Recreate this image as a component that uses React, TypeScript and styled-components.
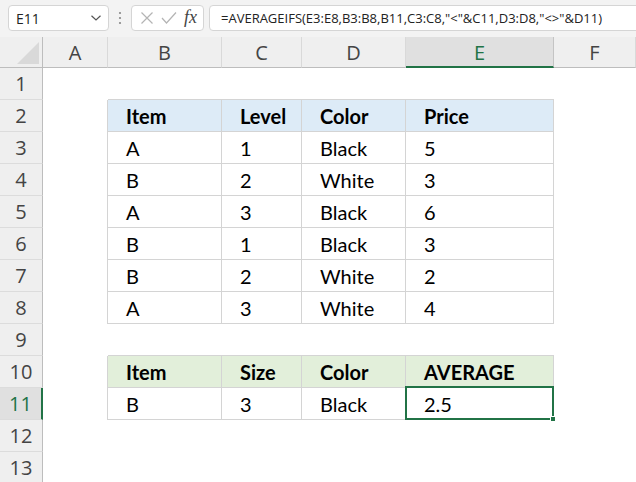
import React from "react";
import styled, { createGlobalStyle, css } from "styled-components";

const GlobalStyle = createGlobalStyle`
  html, body { margin: 0; padding: 0; background: #ffffff; }
  body { overflow: hidden; }
  * { box-sizing: border-box; }
`;

const Window = styled.div`
  width: 636px;
  height: 482px;
  overflow: hidden;
  display: flex;
  flex-direction: column;
  background: #ffffff;
  font-family: "Open Sans", "Noto Sans", sans-serif;
`;

const FormulaBar = styled.div`
  height: 37px;
  flex: none;
  display: flex;
  align-items: flex-start;
  padding: 5px 0 0 8px;
  background: #f3f3f3;
  gap: 0;
`;

const Box = styled.div`
  height: 26px;
  background: #ffffff;
  border: 1px solid #d5d5d5;
  border-radius: 4px;
  display: flex;
  align-items: center;
  font-size: 14px;
  color: #222;
`;

const NameBox = styled(Box)`
  width: 101px;
  padding: 0 6px 0 7px;
  justify-content: space-between;
`;

const Dots = styled.div`
  width: 22px;
  height: 26px;
  display: flex;
  align-items: center;
  justify-content: center;
`;

const ActionBox = styled(Box)`
  width: 73px;
  padding: 0 6px 0 8px;
  justify-content: space-between;
`;

const FormulaBox = styled(Box)`
  flex: 1;
  margin-left: 5px;
  margin-right: -12px;
  padding-left: 11px;
  white-space: nowrap;
  font-size: 13px;
`;

const Fx = styled.span`
  font-family: "Liberation Serif", "DejaVu Serif", serif;
  font-style: italic;
  font-size: 18px;
  color: #444;
  line-height: 1;
  margin-top: -3px;
`;

const Sheet = styled.div`
  flex: 1;
  display: grid;
  grid-template-columns: 43px 65px 114px 80px 104px 148px 82px;
  grid-template-rows: 31px repeat(13, 32px);
  background: #ffffff;
`;

const Corner = styled.div`
  position: relative;
  background: #efefef;
  border-right: 1px solid #bdbdbd;
  border-bottom: 1px solid #bdbdbd;
  &::after {
    content: "";
    position: absolute;
    right: 3px;
    bottom: 3px;
    width: 22px;
    height: 22px;
    background: #d9d9d9;
    clip-path: polygon(100% 0, 100% 100%, 0 100%);
  }
`;

const ColHeader = styled.div<{ $active?: boolean }>`
  background: #efefef;
  border-right: 1px solid #d9d9d9;
  border-bottom: 1px solid #bdbdbd;
  display: flex;
  justify-content: center;
  font-size: 20px;
  line-height: 30px;
  padding-top: 1px;
  color: #444;
  ${(p) =>
    p.$active &&
    css`
      background: #e0e0e0;
      color: #217346;
      border-bottom: 2px solid #217346;
      border-right-color: #c4c4c4;
    `}
`;

const RowHeader = styled.div<{ $active?: boolean }>`
  background: #efefef;
  border-right: 1px solid #bdbdbd;
  border-bottom: 1px solid #dcdcdc;
  display: flex;
  justify-content: center;
  font-size: 20px;
  line-height: 32px;
  color: #444;
  ${(p) =>
    p.$active &&
    css`
      background: #e0e0e0;
      color: #217346;
      border-right: 2px solid #217346;
    `}
`;

type Tone = "blue" | "green" | "plain";

const toneBg: Record<Tone, string> = {
  blue: "#ddebf7",
  green: "#e2efda",
  plain: "#ffffff",
};

const Cell = styled.div<{ $tone?: Tone; $top?: boolean; $left?: boolean; $bold?: boolean }>`
  position: relative;
  background: ${(p) => toneBg[p.$tone ?? "plain"]};
  border-right: 1px solid #d4d4d4;
  border-bottom: 1px solid #d4d4d4;
  box-shadow: ${(p) =>
    [p.$top ? "0 -1px 0 #d4d4d4" : "", p.$left ? "-1px 0 0 #d4d4d4" : ""]
      .filter(Boolean)
      .join(", ") || "none"};
  font-family: Lato, "Open Sans", sans-serif;
  font-size: 20px;
  font-weight: ${(p) => (p.$bold ? 700 : 400)};
  color: #000;
  padding: 1px 0 0 18px;
  line-height: 30px;
  white-space: nowrap;
`;

const Empty = styled.div``;

const Selection = styled.div`
  position: absolute;
  top: -2px;
  left: -1px;
  right: -1px;
  bottom: -1px;
  border: 2px solid #217346;
  pointer-events: none;
`;

const Handle = styled.div`
  position: absolute;
  right: -4px;
  bottom: -4px;
  width: 6px;
  height: 6px;
  background: #217346;
  border: 1px solid #ffffff;
`;

const cols = ["A", "B", "C", "D", "E", "F"];

const table1 = [
  ["Item", "Level", "Color", "Price"],
  ["A", "1", "Black", "5"],
  ["B", "2", "White", "3"],
  ["A", "3", "Black", "6"],
  ["B", "1", "Black", "3"],
  ["B", "2", "White", "2"],
  ["A", "3", "White", "4"],
];

const table2 = [
  ["Item", "Size", "Color", "AVERAGE"],
  ["B", "3", "Black", "2.5"],
];

function rowContent(r: number): React.ReactNode[] {
  const out: React.ReactNode[] = [];
  out.push(<Empty key="a" />);
  let data: string[] | null = null;
  let tone: Tone = "plain";
  let top = false;
  let bold = false;
  if (r >= 2 && r <= 8) {
    data = table1[r - 2];
    tone = r === 2 ? "blue" : "plain";
    top = r === 2;
    bold = r === 2;
  } else if (r === 10 || r === 11) {
    data = table2[r - 10];
    tone = r === 10 ? "green" : "plain";
    top = r === 10;
    bold = r === 10;
  }
  if (data) {
    data.forEach((v, i) => {
      const selected = r === 11 && i === 3;
      out.push(
        <Cell key={i} $tone={tone} $top={top} $left={i === 0} $bold={bold}>
          {v}
          {selected && (
            <Selection>
              <Handle />
            </Selection>
          )}
        </Cell>
      );
    });
  } else {
    for (let i = 0; i < 4; i++) out.push(<Empty key={i} />);
  }
  out.push(<Empty key="f" />);
  return out;
}

export default function App() {
  const rows = Array.from({ length: 13 }, (_, i) => i + 1);
  return (
    <>
      <GlobalStyle />
      <Window>
        <FormulaBar>
          <NameBox>
            <span>E11</span>
            <svg width="12" height="8" viewBox="0 0 12 8">
              <path d="M1.5 1.8 L6 6 L10.5 1.8" fill="none" stroke="#555" strokeWidth="1.2" />
            </svg>
          </NameBox>
          <Dots>
            <svg width="4" height="14" viewBox="0 0 4 14">
              <circle cx="2" cy="2" r="1.1" fill="#888" />
              <circle cx="2" cy="7" r="1.1" fill="#888" />
              <circle cx="2" cy="12" r="1.1" fill="#888" />
            </svg>
          </Dots>
          <ActionBox>
            <svg width="14" height="14" viewBox="0 0 14 14">
              <path d="M1.5 1.5 L12.5 12.5 M12.5 1.5 L1.5 12.5" stroke="#b4b4b4" strokeWidth="1.2" fill="none" />
            </svg>
            <svg width="16" height="14" viewBox="0 0 16 14">
              <path d="M1 7 L5.5 12 L15 1.5" stroke="#b4b4b4" strokeWidth="1.2" fill="none" />
            </svg>
            <Fx>fx</Fx>
          </ActionBox>
          <FormulaBox>
            =AVERAGEIFS(E3:E8,B3:B8,B11,C3:C8,"&lt;"&amp;C11,D3:D8,"&lt;&gt;"&amp;D11)
          </FormulaBox>
        </FormulaBar>
        <Sheet>
          <Corner />
          {cols.map((c) => (
            <ColHeader key={c} $active={c === "E"}>
              {c}
            </ColHeader>
          ))}
          {rows.map((r) => (
            <React.Fragment key={r}>
              <RowHeader $active={r === 11}>{r}</RowHeader>
              {rowContent(r)}
            </React.Fragment>
          ))}
        </Sheet>
      </Window>
    </>
  );
}
